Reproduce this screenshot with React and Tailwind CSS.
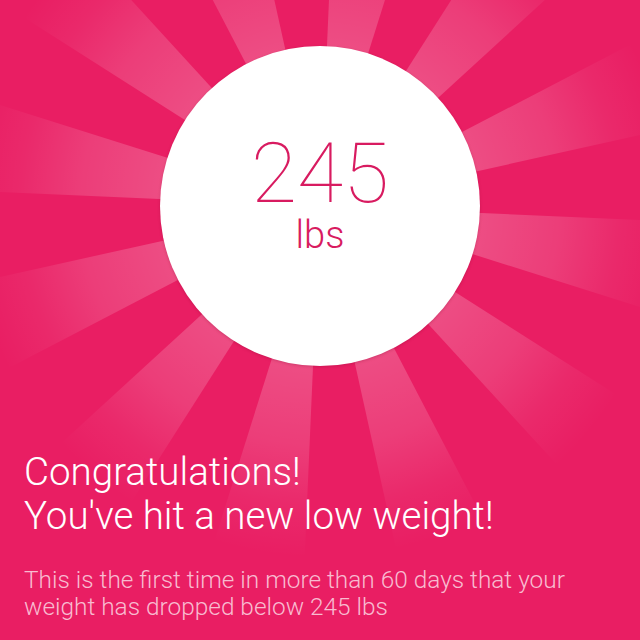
import React from 'react';

const CX = 320;
const CY = 206;

// light rays every 30deg, centred 10deg clockwise from straight up
const rays = Array.from({ length: 12 }, (_, i) => {
  const mid = 10 + i * 30;
  const a1 = ((mid - 7.5 - 90) * Math.PI) / 180;
  const a2 = ((mid + 7.5 - 90) * Math.PI) / 180;
  const R = 700;
  return `${CX},${CY} ${CX + R * Math.cos(a1)},${CY + R * Math.sin(a1)} ${CX + R * Math.cos(a2)},${CY + R * Math.sin(a2)}`;
});

const Sunburst = () => (
  <svg className="absolute inset-0" width="640" height="640" viewBox="0 0 640 640">
    <defs>
      <radialGradient id="rayFade" gradientUnits="userSpaceOnUse" cx={CX} cy={CY} r="400">
        <stop offset="0.4" stopColor="#ffffff" stopOpacity="0.21" />
        <stop offset="0.6" stopColor="#ffffff" stopOpacity="0.14" />
        <stop offset="0.75" stopColor="#ffffff" stopOpacity="0.05" />
        <stop offset="0.88" stopColor="#ffffff" stopOpacity="0" />
      </radialGradient>
    </defs>
    {rays.map((pts, i) => (
      <polygon key={i} points={pts} fill="url(#rayFade)" />
    ))}
  </svg>
);

export default function App() {
  return (
    <div className="relative w-[640px] h-[640px] overflow-hidden bg-[#e91e63] font-['Roboto','Liberation_Sans',sans-serif]">
      <Sunburst />

      <div className="relative flex flex-col">
        <div className="self-center mt-[46px] w-[320px] h-[320px] rounded-full bg-white shadow-[0_1px_3px_rgba(120,0,40,0.25)] flex flex-col items-center pt-[86px] text-[#d81b60]">
          <span className="text-[84px] leading-none font-thin">245</span>
          <span className="text-[38px] leading-none font-light">lbs</span>
        </div>

        <div className="mt-[84px] px-6 text-white text-[38.5px] leading-[44px] font-light">
          <p>Congratulations!</p>
          <p>You've hit a new low weight!</p>
        </div>

        <p className="mt-[28px] px-6 text-[#f8bbd0] text-[24.4px] leading-[27px] font-light">
          This is the first time in more than 60 days that your weight has dropped below 245 lbs
        </p>
      </div>
    </div>
  );
}
